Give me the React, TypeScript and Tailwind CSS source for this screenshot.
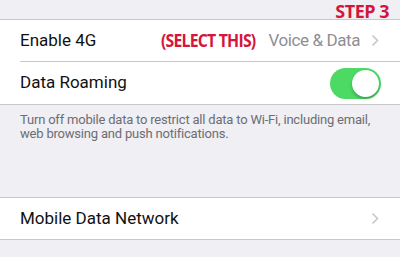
import React from 'react';

const Chevron: React.FC = () => (
  <svg width="8" height="13" viewBox="0 0 8 13" className="shrink-0">
    <path d="M1.5 1.5 L6.5 6.5 L1.5 11.5" fill="none" stroke="#c7c7cc" strokeWidth="1.6" />
  </svg>
);

const Toggle: React.FC = () => (
  <div className="relative w-[51px] h-[31px] rounded-full bg-[#4cd964]">
    <div className="absolute right-[2px] top-[2px] w-[27px] h-[27px] rounded-full bg-white shadow-[0_2px_3px_rgba(0,0,0,0.25)]" />
  </div>
);

const red = { fontFamily: '"Open Sans", sans-serif' };

export default function App() {
  return (
    <div
      className="w-[400px] h-[257px] overflow-hidden bg-[#efeff4] text-[#111]"
      style={{ fontFamily: 'Roboto, "Noto Sans", sans-serif' }}
    >
      <div className="h-[19px] flex justify-end items-start pr-[11px]">
        <span className="text-[18px] font-bold leading-none mt-[2px] tracking-[-0.5px] text-[#d4153c]" style={red}>
          STEP 3
        </span>
      </div>
      <div className="bg-white border-y border-[#c8c7cc]">
        <div className="h-[42px] ml-[20px] flex items-center border-b border-[#c8c7cc] pr-[21px]">
          <span className="text-[17px]">Enable 4G</span>
          <span className="ml-auto w-[92px] flex justify-end">
            <span
              className="inline-block whitespace-nowrap origin-right scale-x-[0.88] text-[18px] font-bold tracking-[-0.9px] text-[#d4153c]"
              style={red}
            >
              (SELECT THIS)
            </span>
          </span>
          <span className="ml-[13px] text-[17px] tracking-[-0.4px] text-[#8e8e93]">Voice &amp; Data</span>
          <span className="ml-[11px]"><Chevron /></span>
        </div>
        <div className="h-[42px] ml-[20px] flex items-center pr-[19px]">
          <span className="text-[17px]">Data Roaming</span>
          <div className="ml-auto"><Toggle /></div>
        </div>
      </div>
      <div className="h-[92px] px-[20px] pt-[8px]">
        <p className="text-[13px] leading-[14px] tracking-[-0.2px] text-[#6d6d72]">
          Turn off mobile data to restrict all data to Wi-Fi, including email, web browsing and push notifications.
        </p>
      </div>
      <div className="bg-white border-y border-[#c8c7cc] h-[43px] flex items-center pl-[20px] pr-[21px]">
        <span className="text-[17px]">Mobile Data Network</span>
        <span className="ml-auto"><Chevron /></span>
      </div>
    </div>
  );
}
